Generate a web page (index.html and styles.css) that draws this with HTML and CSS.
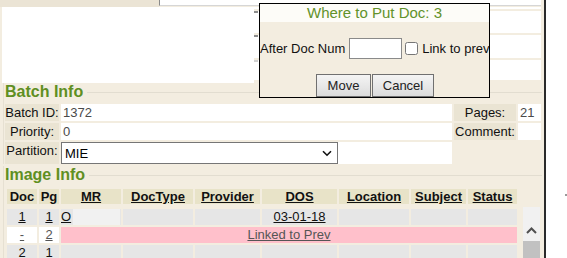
FILE: index.html
```html
<!DOCTYPE html>
<html>
<head>
<meta charset="utf-8">
<link rel="stylesheet" href="styles.css">
</head>
<body>
<div class="page">
  <div class="main">
    <div class="top">
      <div class="top-strip">
        <div class="ts-label"></div>
        <div class="ts-field"></div>
      </div>
      <div class="top-body">
        <div class="viewer"></div>
        <div class="side">
          <div class="side-row h2"></div>
          <div class="side-row h22"><span class="stub dark"></span></div>
          <div class="side-row h23"><span class="stub dark"></span></div>
          <div class="side-row h20"><span class="stub light"></span></div>
        </div>
      </div>
    </div>

    <section class="group">
      <h2 class="legend"><span class="legend-text">Batch Info</span><span class="legend-line"></span></h2>
      <div class="batch-grid">
        <div class="lbl">Batch ID:</div><div class="val">1372</div><div class="lbl">Pages:</div><div class="val">21</div>
        <div class="lbl">Priority:</div><div class="val">0</div><div class="lbl">Comment:</div><div class="val"></div>
        <div class="lbl">Partition:</div>
        <div class="val sel-cell">
          <div class="select"><span>MIE</span>
            <svg class="chev" width="10" height="7" viewBox="0 0 10 7"><path d="M1 1.2 L5 5.2 L9 1.2" fill="none" stroke="#111" stroke-width="1.6"/></svg>
          </div>
        </div>
        <div></div><div></div>
      </div>
    </section>

    <section class="group">
      <h2 class="legend legend-img"><span class="legend-text">Image Info</span><span class="legend-line"></span></h2>
      <div class="grid thead">
        <div class="th">Doc</div>
        <div class="th">Pg</div>
        <div class="th u">MR</div>
        <div class="th u">DocType</div>
        <div class="th u">Provider</div>
        <div class="th u">DOS</div>
        <div class="th u">Location</div>
        <div class="th u">Subject</div>
        <div class="th u">Status</div>
      </div>
      <div class="tbody-wrap">
        <div class="grid tbody">
          <div class="td"><a class="lnk">1</a></div>
          <div class="td"><a class="lnk">1</a></div>
          <div class="td mr"><a class="lnk">O</a><span class="mr-box"></span></div>
          <div class="td"></div>
          <div class="td"></div>
          <div class="td"><a class="lnk">03-01-18</a></div>
          <div class="td"></div>
          <div class="td"></div>
          <div class="td"></div>

          <div class="td white"><a class="lnk grey">-</a></div>
          <div class="td white"><a class="lnk grey">2</a></div>
          <div class="td pink"><a class="lnk grey">Linked to Prev</a></div>

          <div class="td"><a class="lnk">2</a></div>
          <div class="td"><a class="lnk">1</a></div>
          <div class="td"></div>
          <div class="td"></div>
          <div class="td"></div>
          <div class="td"></div>
          <div class="td"></div>
          <div class="td"></div>
          <div class="td"></div>
        </div>
        <div class="scrollbar">
          <div class="sb-up">
            <svg width="11" height="7" viewBox="0 0 11 7"><path d="M1 6 L5.5 1.5 L10 6" fill="none" stroke="#505050" stroke-width="2"/></svg>
          </div>
          <div class="sb-thumb"></div>
        </div>
      </div>
    </section>
  </div>
  <div class="outside"><span class="dot"></span></div>

  <div class="modal">
    <div class="modal-title">Where to Put Doc: 3</div>
    <div class="modal-body">
      <div class="modal-row">
        <span>After Doc Num</span>
        <input class="num" type="text">
        <input class="chk" type="checkbox">
        <span class="chk-label">Link to prev</span>
      </div>
      <div class="modal-buttons">
        <button class="btn btn-move">Move</button>
        <button class="btn btn-cancel">Cancel</button>
      </div>
    </div>
  </div>
</div>
</body>
</html>
```

FILE: styles.css
```css
* { box-sizing: border-box; }
html, body { margin: 0; padding: 0; background: #fff; }
body { font-family: "Liberation Sans", Arial, sans-serif; font-size: 13px; color: #111; }

.page {
  position: relative;
  width: 567px;
  height: 258px;
  overflow: hidden;
  display: flex;
}

.main {
  width: 546px;
  height: 258px;
  background: #f3ede0;
  border-right: 2px solid #2a2a2a;
  overflow: hidden;
  flex: none;
}

/* top area */
.top { height: 83px; }
.top-strip { display: flex; height: 7px; }
.ts-label { width: 159px; background: #ebe4d5; }
.ts-field {
  flex: 1;
  height: 6px;
  background: #fff;
  border-left: 1px solid #8a8a8a;
  border-bottom: 1px solid #d6d6d6;
  margin-right: 3px;
}
.top-body { display: flex; height: 76px; }
.viewer { width: 252px; margin-left: 2px; background: #fff; }
.side {
  flex: 1;
  display: flex;
  flex-direction: column;
  gap: 2px;
  padding-right: 3px;
}
.side-row { background: #fff; display: flex; }
.h2 { height: 2px; }
.h22 { height: 22px; }
.h23 { height: 23px; }
.h20 { height: 20px; }
.stub { width: 4px; height: 2px; }
.stub.dark { background: #8c8c8c; }
.stub.light { background: #d0d0d0; }

/* groups */
.group {
  margin-left: 3px;
  border-left: 1px solid #e6e0d2;
}
.legend {
  margin: 0;
  display: flex;
  align-items: center;
  gap: 4px;
  height: 18px;
  line-height: 18px;
  padding-left: 1px;
  font-size: 16px;
  font-weight: bold;
  color: #5f8f22;
}
.legend-img { margin-top: 2px; }
.legend-line {
  flex: 1;
  height: 1px;
  background: #e2ddd0;
  margin-right: 2px;
  margin-top: 1px;
}

/* batch info */
.batch-grid {
  margin-top: 3px;
  padding-left: 1px;
  display: grid;
  grid-template-columns: 54px 391px 62px 23px;
  grid-template-rows: 17px 17px 22px;
  column-gap: 2px;
  row-gap: 2px;
}
.lbl {
  background: #eae4d3;
  text-align: center;
  line-height: 17px;
  color: #111;
  white-space: nowrap;
}
.val {
  background: #fff;
  line-height: 17px;
  padding-left: 2px;
  color: #4a4a4a;
}
.sel-cell { padding: 0; }
.select {
  width: 277px;
  height: 22px;
  border: 1px solid #767676;
  background: #fff;
  display: flex;
  align-items: center;
  justify-content: space-between;
  padding: 0 4px 0 3px;
  color: #000;
}
.chev { margin-right: 1px; }

/* image info table */
.grid {
  display: grid;
  grid-template-columns: 30px 20px 60px 70px 65px 75px 70px 55px 49px;
  column-gap: 2px;
}
.thead { margin-top: 5px; margin-left: 3px; width: 510px; }
.th {
  background: #e8e3c8;
  height: 15px;
  line-height: 15px;
  font-weight: bold;
  text-align: center;
  color: #111;
}
.th.u { text-decoration: underline; }

.tbody-wrap { display: flex; margin-top: 3px; margin-left: 3px; height: 60px; }
.tbody {
  width: 510px;
  padding-top: 2px;
  grid-auto-rows: 16px;
  row-gap: 2px;
  align-content: start;
}
.td {
  background: #e6e6e6;
  text-align: center;
  line-height: 16px;
}
.td.white { background: #fff; }
.td.pink { background: #ffc0cb; grid-column: 3 / -1; }
.td.mr { display: flex; text-align: left; }
.mr-box { flex: 1; background: #f1f1f1; margin-left: 2px; margin-right: 1px; }
.lnk { color: #111; text-decoration: underline; }
.lnk.grey { color: #555; }

.scrollbar {
  width: 17px;
  margin-left: 6px;
  background: #f1f1f1;
  display: flex;
  flex-direction: column;
}
.sb-up {
  height: 34px;
  display: flex;
  align-items: center;
  justify-content: center;
  padding-top: 12px;
}
.sb-thumb { flex: 1; background: #c1c1c1; }

.outside { flex: 1; padding: 194px 0 0 19px; }
.dot { display: block; width: 2px; height: 2px; background: #9a9a9a; }

/* modal */
.modal {
  position: absolute;
  left: 259px;
  top: 3px;
  width: 231px;
  height: 95px;
  border: 1px solid #000;
  background: #f3ede0;
  overflow: hidden;
}
.modal-title {
  height: 18px;
  line-height: 18px;
  background: #fdfcf8;
  color: #62922a;
  font-size: 15px;
  text-align: center;
}
.modal-body { padding-top: 16px; }
.modal-row {
  display: flex;
  align-items: center;
  height: 21px;
  white-space: nowrap;
}
.num {
  width: 53px;
  height: 21px;
  margin: 0 0 0 4px;
  border: 1px solid #8a8a8a;
  background: #fff;
  padding: 0 2px;
  font: inherit;
}
.chk {
  width: 13px;
  height: 13px;
  margin: 0 0 0 3px;
}
.chk-label { margin-left: 4px; }
.modal-buttons {
  display: flex;
  justify-content: center;
  margin-top: 15px;
  padding-left: 1px;
}
.btn {
  height: 23px;
  margin: 0;
  padding: 0;
  border: 1px solid #707070;
  background: linear-gradient(#f4f4f4, #dcdcdc);
  font-family: "Liberation Sans", Arial, sans-serif;
  font-size: 13px;
  color: #222;
}
.btn-move { width: 55px; }
.btn-cancel { width: 62px; margin-left: 1px; }
```
